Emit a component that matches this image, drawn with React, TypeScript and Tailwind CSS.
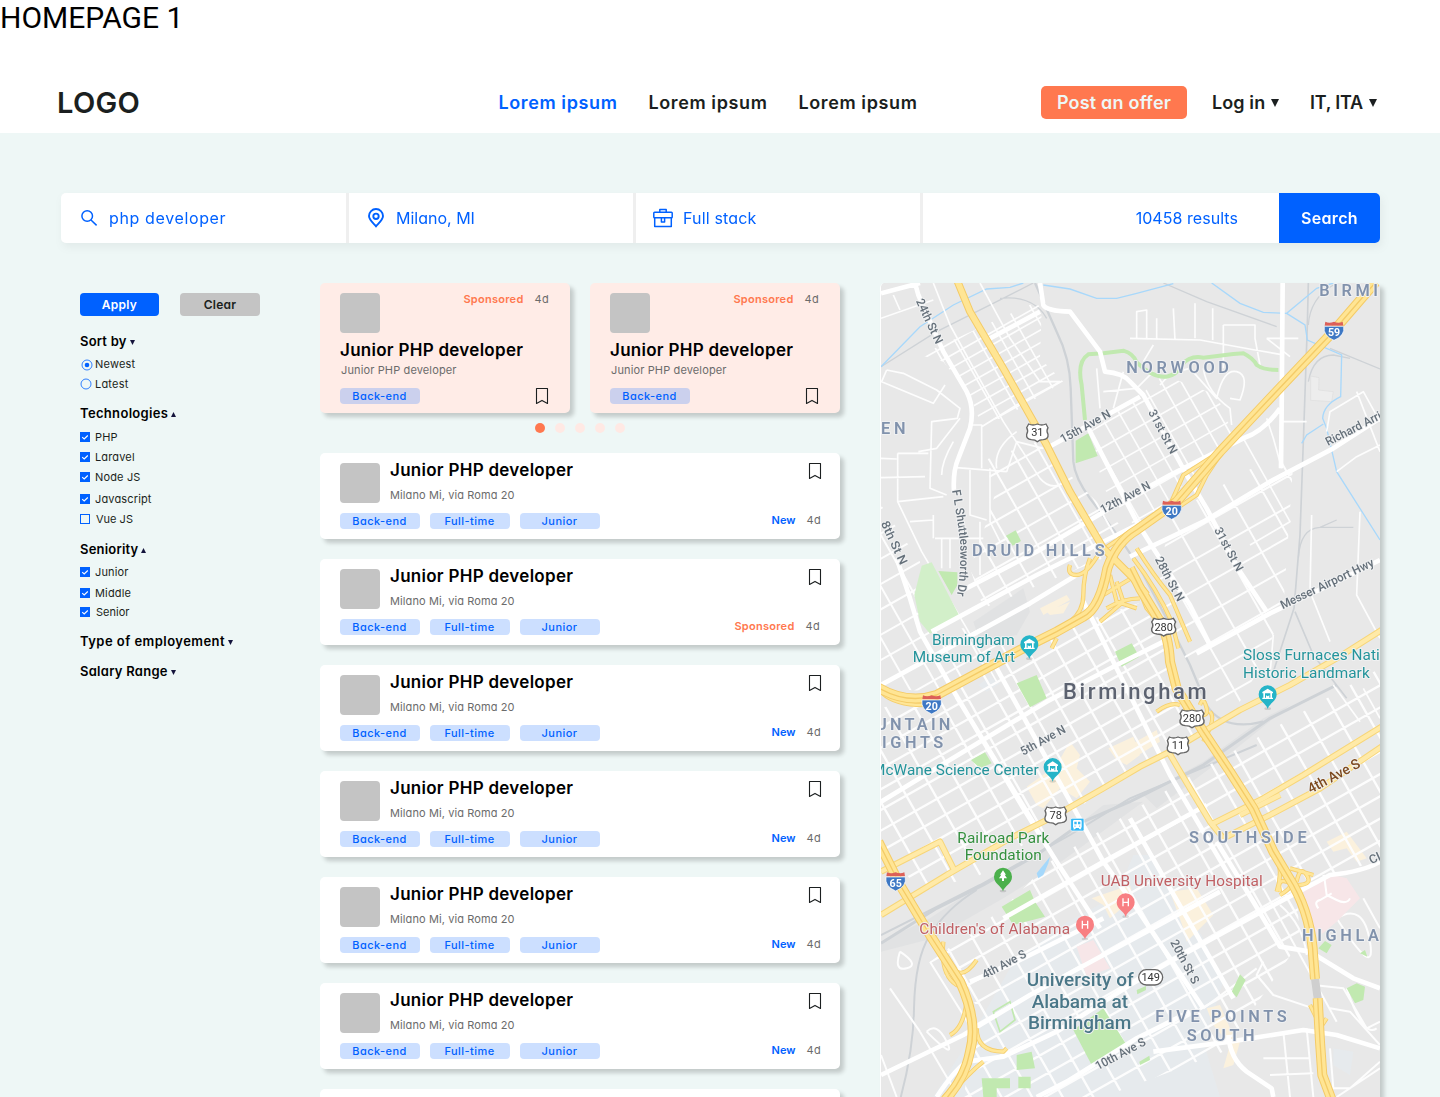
import React from "react";

const UI = "font-['Inter',sans-serif] [font-feature-settings:'cv11']";

function Caret({ up = false, size = 5, color = "#14143c" }: { up?: boolean; size?: number; color?: string }) {
  return (
    <svg width={size} height={size} viewBox="0 0 10 10" className="shrink-0">
      <path d={up ? "M0 10L5 0L10 10Z" : "M0 0L5 10L10 0Z"} fill={color} />
    </svg>
  );
}

function Bookmark() {
  return (
    <svg width="14" height="18" viewBox="0 0 14 18" fill="none" stroke="#1b1f20" strokeWidth="1.1" className="shrink-0">
      <path d="M1.5 1.5H12.5V16.5L7 13.4L1.5 16.5Z" strokeLinejoin="round" />
    </svg>
  );
}

function Header() {
  return (
    <header className="h-[133px] bg-white">
      <div className="h-[36px] font-['Roboto',sans-serif] text-[30px] leading-[35px] text-black">HOMEPAGE 1</div>
      <div className="mt-[50px] flex h-[33px] items-center text-[18px] font-semibold text-[#1b1f20]">
        <div className="ml-[57px] w-[441.5px] text-[29px] font-semibold tracking-[0.3px]">LOGO</div>
        <nav className="flex w-[542.5px] tracking-[0.6px]">
          <span className="w-[150px] text-[#0061ff]">Lorem ipsum</span>
          <span className="w-[150px]">Lorem ipsum</span>
          <span>Lorem ipsum</span>
        </nav>
        <button className="h-[33px] w-[146px] rounded-[5px] bg-[#ff784f] text-[18px] font-semibold text-[#eef7f6] tracking-[0.2px]">Post an offer</button>
        <div className="ml-[25px] flex w-[98px] items-center gap-[6px]">
          <span className="tracking-[0.1px]">Log in</span>
          <Caret size={8} color="#1b1f20" />
        </div>
        <div className="flex items-center gap-[6px]">
          <span className="tracking-[-0.25px]">IT, ITA</span>
          <Caret size={8} color="#1b1f20" />
        </div>
      </div>
    </header>
  );
}

function SearchBar() {
  return (
    <div className="ml-[61px] mt-[60px] flex h-[50px] w-[1319px] gap-[3px] overflow-hidden rounded-[5px] bg-[#efefef] text-[16px] text-[#0061ff]">
      <div className="flex w-[285px] items-center bg-white pl-[19px]">
        <svg width="18" height="18" viewBox="0 0 18 18" fill="none" stroke="#0061ff" strokeWidth="1.5">
          <circle cx="7.2" cy="7" r="5.3" />
          <path d="M11 11L16.6 16.4" />
        </svg>
        <span className="ml-[11px] tracking-[0.63px]">php developer</span>
      </div>
      <div className="flex w-[284px] items-center bg-white pl-[18px]">
        <svg width="18" height="20" viewBox="0 0 18 20" fill="none" stroke="#0061ff" strokeWidth="1.9">
          <path d="M9 18.3C5 14 2 11.5 2 8A7 7 0 0 1 16 8C16 11.5 13 14 9 18.3Z" />
          <circle cx="9" cy="8.3" r="2.7" />
        </svg>
        <span className="ml-[11px]">Milano, MI</span>
      </div>
      <div className="flex w-[284px] items-center bg-white pl-[17px]">
        <svg width="20" height="20" viewBox="0 0 20 20" fill="none" stroke="#0061ff" strokeWidth="1.5" strokeLinejoin="round">
          <path d="M6.8 4.2V1.5H13.2V4.2" />
          <rect x="0.8" y="4.2" width="18.4" height="5.6" rx="0.8" />
          <path d="M1.7 9.8V18.5H18.3V9.8" />
          <path d="M8.4 9.8V14H11.6V9.8" />
        </svg>
        <span className="ml-[10px] tracking-[0.17px]">Full stack</span>
      </div>
      <div className="flex flex-1 bg-white">
        <span className="flex flex-1 items-center justify-end pr-[41px] tracking-[0.05px]">10458 results</span>
        <button className="w-[101px] bg-[#0061ff] font-semibold tracking-[0.35px] text-white">Search</button>
      </div>
    </div>
  );
}

function Heading({ children, up, className }: { children: string; up?: boolean; className: string }) {
  return (
    <div className={"flex h-5 items-center gap-[3px] pt-[2px] text-[13px] font-semibold text-black " + className}>
      <span>{children}</span>
      <Caret up={up} />
    </div>
  );
}

function Check({ label, off = false, nudge = false, className = "" }: { label: string; off?: boolean; nudge?: boolean; className?: string }) {
  return (
    <label className={"flex h-5 items-center text-[11px] text-[#1b1f20] " + className}>
      <svg width="10" height="10" viewBox="0 0 10 10" className="shrink-0">
        <rect x="0.5" y="0.5" width="9" height="9" fill={off ? "none" : "#0061ff"} stroke="#0061ff" />
        {!off && <path d="M2.2 5.2L4.2 7L7.8 3.5" fill="none" stroke="white" strokeWidth="1.1" />}
      </svg>
      <span className={nudge ? "ml-[6px]" : "ml-[5px] tracking-[0.15px]"}>{label}</span>
    </label>
  );
}

function Radio({ label, on = false }: { label: string; on?: boolean }) {
  return (
    <label className="flex h-5 items-center text-[11px] tracking-[0.2px] text-[#1b1f20]">
      <svg width="12" height="12" viewBox="0 0 12 12" className={on ? "ml-px mt-px shrink-0" : "mr-px shrink-0"}>
        <circle cx="6" cy="6" r="5" fill="none" stroke="#0061ff" strokeWidth="0.8" />
        {on && <circle cx="6" cy="6" r="2.3" fill="#0061ff" />}
      </svg>
      <span className="ml-[2px]">{label}</span>
    </label>
  );
}

function Filters() {
  return (
    <aside className="w-[240px] pt-[10px]">
      <div className="flex gap-[21px] text-[12px] font-semibold tracking-[0.25px]">
        <button className="h-[23px] w-[79px] rounded-[4px] bg-[#0061ff] text-white">Apply</button>
        <button className="h-[23px] w-[80px] rounded-[4px] bg-[#c4c4c4] text-[#1b1f20]">Clear</button>
      </div>
      <Heading className="mt-[15px] tracking-[0.2px]">Sort by</Heading>
      <div className="mt-[3px]">
        <Radio label="Newest" on />
        <Radio label="Latest" />
      </div>
      <Heading up className="mt-[9px] tracking-[0.33px]">Technologies</Heading>
      <div className="mt-1">
        <Check label="PHP" />
        <Check label="Laravel" />
        <Check label="Node JS" />
        <Check label="Javascript" className="mt-[2px] tracking-[0.2px]" />
        <Check label="Vue JS" off nudge />
      </div>
      <Heading up className="mt-[10px] tracking-[0.2px]">Seniority</Heading>
      <div className="mt-[3px]">
        <Check label="Junior" />
        <Check label="Middle" className="mt-px" />
        <Check label="Senior" nudge className="-mt-px" />
      </div>
      <Heading className="mt-[9px] tracking-[0.46px]">Type of employement</Heading>
      <Heading className="mt-[10px] tracking-[0.27px]">Salary Range</Heading>
    </aside>
  );
}

function Tag({ children, dark = false }: { children: string; dark?: boolean }) {
  return (
    <span className={"flex h-4 w-20 items-center justify-center rounded-[4px] pr-px text-[11px] font-medium tracking-[0.45px] text-[#0061ff] " + (dark ? "bg-[#cbd0ed]" : "bg-[#ccdfff]")}>
      {children}
    </span>
  );
}

const Avatar = () => <div className="size-10 shrink-0 rounded-[4px] bg-[#c4c4c4]" />;

function SponsoredCard() {
  return (
    <article className="h-[130px] w-[250px] rounded-[5px] bg-[#ffece7] pl-5 pt-[10px] shadow-[4px_4px_4px_rgba(0,0,0,0.18)]">
      <div className="flex h-10 justify-between pr-[21px]">
        <Avatar />
        <div className="flex h-3 items-center gap-[11px] text-[11px]">
          <span className="font-semibold tracking-[0.27px] text-[#ff784f]">Sponsored</span>
          <span className="tracking-[0.3px] text-[#6b6b6b]">4d</span>
        </div>
      </div>
      <h3 className="mt-[7px] h-5 text-[17px] font-semibold leading-5 tracking-[0.28px] text-black">Junior PHP developer</h3>
      <p className="ml-px mt-[3px] h-[14px] text-[11px] leading-[14px] tracking-[0.13px] text-[#6b6b6b]">Junior PHP developer</p>
      <div className="mt-[11px] flex h-4 items-center justify-between pr-[21px]">
        <Tag dark>Back-end</Tag>
        <Bookmark />
      </div>
    </article>
  );
}

function JobCard({ sponsored = false }: { sponsored?: boolean }) {
  return (
    <article className="h-[86px] shrink-0 rounded-[5px] bg-white pl-5 pr-[18px] pt-[10px] shadow-[4px_4px_4px_rgba(0,0,0,0.18)]">
      <div className="flex h-10">
        <Avatar />
        <div className="ml-[10px] flex-1">
          <h3 className="-mt-[3px] h-5 text-[17px] font-semibold leading-5 tracking-[0.28px] text-black">Junior PHP developer</h3>
          <p className="mt-[8px] h-[14px] text-[11px] leading-[14px] tracking-[0.1px] text-[#6b6b6b]">Milano Mi, via Roma 20</p>
        </div>
        <div className="-mt-[1px]"><Bookmark /></div>
      </div>
      <div className="mt-[10px] flex h-4 items-center gap-[10px]">
        <Tag>Back-end</Tag>
        <Tag>Full-time</Tag>
        <Tag>Junior</Tag>
        <div className={"flex flex-1 items-center justify-end gap-[11px] pb-px text-[11px] " + (sponsored ? "pr-[2px]" : "pr-px")}>
          {sponsored ? <span className="font-semibold tracking-[0.27px] text-[#ff784f]">Sponsored</span> : <span className="font-semibold text-[#0061ff]">New</span>}
          <span className="tracking-[0.3px] text-[#6b6b6b]">4d</span>
        </div>
      </div>
    </article>
  );
}

/* ---------- Map ---------- */

type Pt = [number, number];

/** Builds the lines of a street grid, later rotated to the town's main axis. */
function gridPath(cx: number, cy: number, w: number, h: number, stepX: number, stepY: number) {
  let d = "";
  for (let x = cx - w; x <= cx + w; x += stepX) d += `M${x} ${cy - h}V${cy + h}`;
  for (let y = cy - h; y <= cy + h; y += stepY) d += `M${cx - w} ${y}H${cx + w}`;
  return d;
}

const grids: { id: string; clip: string; c: Pt; size: Pt; step: Pt; w: number }[] = [
  { id: "nw", clip: "150,240 500,80 515,110 510,250 580,320 400,430 330,440 300,360 220,260", c: [350, 260], size: [300, 300], step: [62, 33], w: 5 },
  { id: "druid", clip: "330,560 500,500 640,640 760,760 700,850 340,1000 300,880 350,740 380,640", c: [520, 760], size: [400, 400], step: [72, 62], w: 6 },
  { id: "norwood", clip: "660,470 800,370 880,300 1040,360 1090,480 1010,560 880,690 800,760 700,640", c: [860, 540], size: [400, 400], step: [52, 60], w: 5 },
  { id: "east", clip: "900,720 1180,560 1270,560 1240,1000 1180,1160 1080,1330 960,1180 860,960", c: [1060, 920], size: [500, 500], step: [92, 80], w: 6 },
  { id: "west", clip: "33,690 150,860 150,1060 330,1060 450,1130 200,1250 33,1240", c: [180, 1000], size: [400, 400], step: [76, 66], w: 6 },
  { id: "town", clip: "33,1300 260,1230 640,1040 820,980 900,1160 1000,1380 820,1470 560,1640 330,1800 150,1850 33,1700", c: [500, 1400], size: [800, 700], step: [76, 54], w: 7 },
  { id: "south", clip: "540,1760 800,1600 1000,1480 1140,1400 1530,1180 1530,1750 1280,1850 1290,2000 1060,2330 700,2466 280,2466 330,2200 180,2060 400,1900", c: [850, 1850], size: [1100, 900], step: [80, 58], w: 7 },
];

const localStreets =
  "M33 130L190 75M70 60L90 105M190 24L240 150L300 260L400 440L510 610Q545 650 585 620M330 24L420 190L510 320L570 320M50 285L100 295L200 345L270 400L262 430L185 440L180 640L230 660M50 285L35 320L190 385L225 330M33 550L80 552M33 608L165 605M83 535V680L155 830L290 1060L380 1220M83 535H175M83 680L220 665M120 740L190 735M145 530L200 520L270 430M215 600Q215 560 250 500M305 450H335V580M260 578L410 590M335 455L440 390L570 320M380 580Q370 520 440 470M410 590L440 500L520 520M360 580V740L390 800M300 580V720L350 735M190 720V790M195 790L340 790M215 790V880M330 740V900M240 790V880M800 190V110L830 105V190M780 190L990 195L1155 225L1230 238M860 130V195M910 100L915 195M975 85V190M1028 100V195M1060 150H1155V190L1170 270M1060 150V280M850 210L820 260M700 350L800 340L850 290M680 280L690 400M760 290L730 400M870 330Q900 290 960 280L1040 370Q1060 280 1100 290T1110 375L1080 370M1000 280Q1010 350 1080 400L1085 450M1190 190L1285 190M1190 190L1260 245M1230 440L1310 440M1190 430L1210 490L1235 580M1120 490L1260 740L1140 810M1370 470L1380 410L1480 350L1530 440M1460 350L1530 530M1400 590L1460 545L1530 510M1325 720L1320 950L1380 1100M1470 710L1460 960L1530 1090M1210 1080L1200 1200M1390 1230L1470 1340M1480 1240L1530 1330";

const localSouth =
  "M90 2030Q70 2090 110 2080T90 2030M150 2270L250 2440M180 2060L330 2300M33 2340L80 2466M60 2140L150 2270M170 2270Q200 2240 230 2300T170 2270M1180 1840L1400 2240M1230 1890Q1300 1950 1310 2040M1360 1800L1370 1860L1450 1880L1440 1840M1340 1950L1370 1900M1400 1930Q1480 1880 1500 2000T1400 1930M1480 1870L1530 1960M1330 2130L1420 2140L1490 2260L1530 2240M1180 2060L1160 2100L1210 2160L1330 2200M1000 2200L1160 2080M1180 2350H1320M1200 2400L1330 2395M1240 2270L1260 2466M1310 2260L1330 2466M1380 2320L1390 2440L1440 2440L1530 2360M1400 2466L1530 2380M1380 2200L1440 2210L1530 2310M1430 2140Q1480 2290 1520 2260";

const avenues =
  "M33 55L150 24M360 190L510 110M135 24L145 60L220 230L290 350Q315 400 300 460L265 550Q248 590 252 650M80 850L120 970L150 1070L240 1230L460 1600L560 1760L690 1960M510 24L520 90Q530 108 600 110L690 230L705 290Q760 295 780 320L820 360L950 600L1010 700L1110 890L1190 1010M530 520L810 365M270 950L500 830L720 700L900 600L1040 530L1120 490Q1180 470 1230 400M1238 24L1235 400L1233 580M780 845L1000 740L1200 620L1390 520L1530 430M645 440L800 740L850 820L960 990L1020 1110M185 1070L500 900L800 750M980 1135L1200 1015L1400 920L1530 855M33 1580L330 1400L530 1280L740 1170L900 1090M640 980L750 1200L900 1500L1100 1840M380 1180L700 1760L800 1900L1000 2200M260 1265L500 1660M33 1230L480 985L620 900M780 1630L900 1840L1090 2170M1040 1700L1150 1880L1230 2015L1320 2030L1450 2110L1530 2140M1530 1760Q1480 1790 1380 1800L1230 1880L900 2060L780 2130L560 2270L400 2345L290 2360Q250 2390 200 2466M33 2400L280 2280L480 2160L700 2040L830 1970L1050 1850M400 1930L700 1760L1010 1590M500 2466L590 2420L800 2290L960 2210M850 2330L1080 2300L1300 2265L1400 2280L1530 2320M1075 2280Q1080 2350 1130 2390L1205 2440L1210 2466M300 2120L420 2070L700 1930";

const freeways = [
  "M262 18L300 110L400 280L530 510L600 650L700 820L790 910L830 960",
  "M1520 18L1380 180L1200 370L1050 530L920 680L800 765Q740 800 712 880Q690 1000 640 1025L560 1070L450 1125L330 1190L200 1260Q110 1290 20 1235",
  "M780 880L810 940L870 1040Q895 1080 900 1160L920 1240L1000 1370L1080 1490L1150 1600L1210 1730L1270 1830Q1325 1930 1330 2050L1335 2112",
  "M1343 2170L1350 2300L1357 2400L1385 2475",
  "M25 1700L90 1830L180 1980L270 2120Q325 2240 300 2330Q285 2410 225 2475",
];

const arterials = [
  "M33 1920L230 1800L420 1690L560 1620L700 1540L810 1475L900 1430L1000 1370L1110 1305L1260 1230L1400 1150L1535 1065",
  "M33 1790L210 1700L255 1790",
  "M895 1430L960 1540L1020 1640L1060 1690",
  "M1020 1650L1180 1570L1300 1500L1535 1355",
  "M1060 1690L1200 1620L1350 1540L1535 1415",
  "M1110 1620L1230 1560",
];

const ramps =
  "M600 870Q590 900 620 900T690 830L780 770M660 850Q640 900 640 960Q640 1010 600 1040M720 900L740 980L800 1000M700 960L800 900M710 1000Q760 970 810 970M690 1040L760 980L740 920M900 690L940 600L1050 530M920 700L980 660L1010 600L1050 540M800 820Q850 900 900 960L960 1100M33 1250Q70 1290 160 1290M790 850Q860 940 905 1040L925 1120M790 900L830 1000L900 1080M220 2000Q210 2100 260 2130L290 2140M230 2060Q270 2130 320 2055M240 2280Q280 2260 290 2180M320 2260Q320 2330 400 2330L410 2320M340 2360Q300 2390 240 2460M860 1310Q900 1280 930 1290M990 1290Q1000 1260 1010 1300T940 1300M1000 1400Q1040 1330 1020 1310M1220 1740Q1240 1790 1220 1850M1230 1850Q1220 1810 1250 1820T1230 1860M1260 1780L1330 1800M1280 1820Q1290 1770 1310 1800T1280 1830M1320 2190L1340 2230M1370 2230L1350 2260M560 1090L545 1120";

function Halo(props: React.SVGProps<SVGTextElement> & { width: number }) {
  const { width, ...rest } = props;
  return <text textLength={width} stroke="#f0f1f2" strokeWidth="6" strokeLinejoin="round" paintOrder="stroke" {...rest} />;
}

function District({ x, y, width, children }: { x: number; y: number; width: number; children: string }) {
  return <Halo x={x} y={y} width={width} fontSize="49" fontWeight="600" fill="#8192ac">{children}</Halo>;
}

function Road({ x, y, width, angle, children, color = "#65707a", size = 36 }: { x: number; y: number; width: number; angle: number; children: string; color?: string; size?: number }) {
  return (
    <Halo width={width} lengthAdjust="spacingAndGlyphs" transform={`translate(${x} ${y}) rotate(${angle})`} fontSize={size} fontWeight="500" fill={color}>{children}</Halo>
  );
}

function Pin({ x, y, color, kind }: { x: number; y: number; color: string; kind: "museum" | "tree" | "H" }) {
  return (
    <g transform={`translate(${x} ${y})`}>
      <ellipse cx="0" cy="43" rx="10" ry="4" fill="#00000020" />
      <path d="M0 44C-5 26-27 22-27 0A27 27 0 1 1 27 0C27 22 5 26 0 44Z" fill={color} />
      {kind === "museum" && <path d="M-16-7L0-17L16-7V-3H13V10H16V14H-16V10H-13V-3H-16ZM-8-3V10H-5V3L0 6L5 3V10H8V-3Z" fill="white" fillRule="evenodd" />}
      {kind === "tree" && <path d="M0-19L9-6H5L12 5H3V13H-3V5H-12L-5-6H-9Z" fill="white" />}
      {kind === "H" && <path d="M-8-12V12M8-12V12M-8 0H8" stroke="white" strokeWidth="4" />}
    </g>
  );
}

function Interstate({ x, y, n }: { x: number; y: number; n: string }) {
  return (
    <g transform={`translate(${x} ${y})`}>
      <path d="M-26-27Q-14-21 0-27Q14-21 26-27L28-15H-28Z" fill="#dc6058" />
      <path d="M-29-13H29Q34 15 0 29Q-34 15-29-13Z" fill="#3e78c4" stroke="white" strokeWidth="2" />
      <text y="17" textAnchor="middle" fill="white" fontSize="32" fontWeight="700">{n}</text>
    </g>
  );
}

function Shield({ x, y, n, wide = false }: { x: number; y: number; n: string; wide?: boolean }) {
  return (
    <g transform={`translate(${x} ${y})`}>
      <path transform={wide ? "scale(1.12 1)" : undefined} d="M-26-25Q-13-19 0-25Q13-19 26-25L32-14Q26-4 32 6Q34 20 18 22Q6 22 0 28Q-6 22-18 22Q-34 20-32 6Q-26-4-32-14Z" fill="white" stroke="#666" strokeWidth="4" />
      <text y="12" textAnchor="middle" fill="#333" fontSize="33">{n}</text>
    </g>
  );
}

function CityMap() {
  return (
    <div className="ml-10 h-[814px] w-[500px] shrink-0 overflow-hidden rounded-t-[5px] border-l border-white bg-[#e8e8e8]">
      <svg width="499" height="814" viewBox="33 24 1497 2442" className="block font-['Roboto',sans-serif]">
        <defs>
          {grids.map((g) => (
            <clipPath key={g.id} id={`area-${g.id}`}><polygon points={g.clip} /></clipPath>
          ))}
          <path id="shuttlesworth" d="M246 646Q262 730 270 800Q274 890 258 975" />
        </defs>
        <rect x="33" y="24" width="1497" height="2442" fill="#e8e8e8" />
        <g fill="#e6eaed">
          <path d="M190 2466L300 2290L420 2080L560 1960L740 1860L790 1740L840 1740L1000 1990L1060 2120L1000 2300L1050 2466Z" />
          <path d="M325 1230L360 1205L390 1225L350 1250ZM1390 2320L1450 2330L1440 2400L1390 2370Z" />
        </g>
        <g fill="#e1e2e3">
          <path d="M310 1040L460 940L480 1010L440 1080L330 1100ZM33 2000L180 1930L330 1830L560 1700L700 1590L820 1580L560 1770L400 1870L190 1990L33 2030Z" />
          <path d="M820 1560L1000 1460L1180 1330L1260 1290L1100 1420L860 1600Z" />
        </g>
        <path d="M1322 303L1347 308L1346 345L1390 350L1385 380L1322 376Z" fill="#ededed" stroke="#dedede" strokeWidth="2" />
        <g fill="#fbf1dd">
          <path d="M470 1535L560 1470L600 1400L630 1440L620 1480L660 1520L620 1570L570 1540L520 1600L500 1590ZM715 1420L790 1385L810 1440L770 1470L740 1455ZM780 1410L860 1365L870 1400L790 1450ZM510 1000L590 960L600 975L520 1020ZM530 1010L600 980L580 1015L540 1020Z" />
          <path d="M665 1870L780 1830L790 1870L720 1930L700 1890ZM900 1850L980 1840L1030 1920L950 2000L940 1960ZM1370 1700L1430 1670L1490 1750L1460 1760L1430 1720L1390 1730ZM1010 2200L1050 2190L1080 2260L1110 2300L1090 2370L1060 2380L1080 2310L1030 2250Z" />
        </g>
        <g fill="none" stroke="#ced2d6" strokeLinejoin="round">
          <path d="M495 24L560 170Q600 250 602 340L610 560Q615 610 660 670L750 790L810 880L900 1050L960 1170L1010 1290Q1060 1370 1180 1340" strokeWidth="7" />
          <path d="M1315 24L1312 150L1300 500L1290 780L1272 1000L1210 1190M1275 1010L1330 1140L1430 1270" strokeWidth="5" />
          <path d="M33 275L200 170L380 80L490 24M390 70Q490 60 530 130M880 24L1010 80L1220 155M1380 220L1530 282M1315 150Q1320 70 1390 30M1315 320Q1330 240 1390 240L1440 250M1285 850Q1290 760 1350 757H1450M1350 757L1400 735" strokeWidth="4" />
          <path d="M33 2005L200 1900L340 1830L500 1740L640 1640L780 1580L1000 1470L1200 1330L1400 1230" strokeWidth="9" />
          <path d="M33 1980L330 1830L600 1680L780 1570L1160 1410M90 2475Q130 2330 132 2200Q135 2050 180 1980Q230 1900 320 1845" strokeWidth="6" />
        </g>
        <g fill="none" stroke="#a8d8fb" strokeWidth="4">
          <path d="M33 275L150 155L250 90L350 42L420 37L460 24M520 30L600 42L680 70L740 70L800 55L910 26M1025 24L1110 85L1180 112L1250 115L1340 40L1390 24M1250 115L1305 150L1312 195L1415 240L1412 365Q1360 390 1358 430L1370 460L1400 590L1530 795M1360 447L1310 480L1295 505" />
        </g>
        <g fill="none" stroke="#fdfdfd" strokeLinejoin="round">
          {grids.map((g) => (
            <g key={g.id} clipPath={`url(#area-${g.id})`}>
              <path d={gridPath(g.c[0], g.c[1], g.size[0], g.size[1], g.step[0], g.step[1])} transform={`rotate(-29.5 ${g.c[0]} ${g.c[1]})`} strokeWidth={g.w} />
            </g>
          ))}
          <path d={localStreets} strokeWidth="5" />
          <path d={localSouth} strokeWidth="6" />
        </g>
        <path d="M1300 1850L1390 1800L1430 1810L1470 1870L1400 1940L1345 1985L1320 1930ZM620 2015L670 1995L720 2080L650 2105Z" fill="#f7e6e8" />
        <path d="M1362 1800L1370 1860L1400 1875Q1430 1890 1440 1870M1345 1900Q1330 1880 1350 1875L1385 1855" fill="none" stroke="white" strokeWidth="6" />
        <path d="M155 872L185 862L272 1030L180 1076L150 1040L133 960Z" fill="#d2efc9" />
        <g fill="#c1e9b0">
          <path d="M617 497L655 475L683 543L617 565ZM408 782L437 766L453 798L428 812ZM205 888L262 892L262 930L245 960ZM735 1130L785 1105L808 1145L755 1175ZM440 1225L500 1200L530 1270L480 1297ZM303 1455L345 1432L365 1465L330 1480ZM395 1895L480 1845L495 1880L525 1925L430 1950ZM610 2265L700 2200L770 2310L665 2370Z" />
          <path d="M440 2340L485 2330L495 2380L440 2385ZM335 2410H420V2440H380V2466H340ZM445 2405H482V2440H445ZM1085 2150L1110 2098L1127 2115L1100 2167ZM1430 2140L1460 2125L1485 2135L1480 2175L1455 2185ZM1345 2020L1365 1998L1385 2010L1370 2035ZM1470 2035L1485 2025L1492 2045ZM800 2145L828 2133L828 2145L802 2158ZM808 2360L838 2342L840 2355L810 2370ZM1200 1560L1225 1548L1228 1560L1205 1570Z" />
        </g>
        <path d="M370 2210L420 2180L435 2235L390 2270Z" fill="none" stroke="#c1e9b0" strokeWidth="5" />
        <path d="M500 1795L540 1745L535 1765L520 1800L505 1810Z" fill="#a5d8fb" />
        <path d="M645 435L635 330Q620 260 655 238L700 235L760 227Q790 235 800 262Q850 310 890 305Q920 300 935 270Q960 240 1000 248L1090 237L1120 235Q1150 250 1160 270Q1180 285 1225 285" fill="none" stroke="#c1e9b0" strokeWidth="12" />
        <path d={avenues} fill="none" stroke="white" strokeWidth="14" strokeLinejoin="round" />
        <g fill="none" strokeLinejoin="round">
          <path d={ramps} stroke="#f5ce6c" strokeWidth="13" />
          <path d={ramps} stroke="#ffe697" strokeWidth="8" />
          {arterials.map((d) => <path key={d} d={d} stroke="#f7d679" strokeWidth="19" />)}
          {arterials.map((d) => <path key={d} d={d} stroke="#ffeaa8" strokeWidth="13" />)}
          <path d="M1335 2112L1343 2170" stroke="#cfcfcf" strokeWidth="24" />
          {freeways.map((d, i) => <path key={d} d={d} stroke="#f4cb67" strokeWidth={i === 0 ? 23 : 30} />)}
          {freeways.map((d, i) => <path key={d} d={d} stroke="#ffe594" strokeWidth={i === 0 ? 17 : 24} />)}
          {freeways.slice(1).map((d) => <path key={d} d={d} stroke="#f4cb67" strokeWidth="4" />)}
        </g>

        <District x={1348} y={62} width={176}>BIRMI</District>
        <District x={769} y={294} width={308}>NORWOOD</District>
        <District x={33} y={476} width={74}>EN</District>
        <District x={306} y={844} width={398}>DRUID HILLS</District>
        <District x={18} y={1364} width={223}>UNTAIN</District>
        <District x={36} y={1420} width={184}>IGHTS</District>
        <District x={957} y={1703} width={353}>SOUTHSIDE</District>
        <District x={1296} y={1997} width={231}>HIGHLA</District>
        <District x={856} y={2241} width={394}>FIVE POINTS</District>
        <District x={950} y={2297} width={204}>SOUTH</District>

        <Road x={137} y={78} width={145} angle={65}>24th St N</Road>
        <text fontSize="36" fontWeight="500" fill="#65707a" stroke="#f0f1f2" strokeWidth="6" paintOrder="stroke">
          <textPath href="#shuttlesworth" textLength="318" lengthAdjust="spacingAndGlyphs">F L Shuttlesworth Dr</textPath>
        </text>
        <Road x={32} y={745} width={140} angle={65}>8th St N</Road>
        <Road x={579} y={505} width={167} angle={-29}>15th Ave N</Road>
        <Road x={699} y={716} width={164} angle={-28}>12th Ave N</Road>
        <Road x={834} y={412} width={144} angle={62}>31st St N</Road>
        <Road x={1032} y={765} width={144} angle={62}>31st St N</Road>
        <Road x={854} y={853} width={146} angle={62}>28th St N</Road>
        <Road x={1374} y={513} width={183} angle={-27}>Richard Arri</Road>
        <Road x={1238} y={1003} width={306} angle={-25.5}>Messer Airport Hwy</Road>
        <Road x={460} y={1442} width={148} angle={-29}>5th Ave N</Road>
        <Road x={344} y={2112} width={144} angle={-28}>4th Ave S</Road>
        <Road x={1322} y={1556} width={172} angle={-28} color="#7d4a1f" size={42}>4th Ave S</Road>
        <Road x={900} y={2002} width={144} angle={62}>20th St S</Road>
        <Road x={684} y={2386} width={165} angle={-28}>10th Ave S</Road>
        <Road x={1504} y={1768} width={34} angle={-25}>Cl</Road>

        <g fontSize="46" fill="#24949b">
          <Halo x={186} y={1109} width={248}>Birmingham</Halo>
          <Halo x={128} y={1161} width={307}>Museum of Art</Halo>
          <Halo x={1119} y={1155} width={410}>Sloss Furnaces Nati</Halo>
          <Halo x={1119} y={1208} width={380}>Historic Landmark</Halo>
          <Halo x={6} y={1500} width={500}>McWane Science Center</Halo>
        </g>
        <g fontSize="46" fill="#35903f">
          <Halo x={262} y={1704} width={276}>Railroad Park</Halo>
          <Halo x={284} y={1756} width={231}>Foundation</Halo>
        </g>
        <g fontSize="46" fill="#c06064">
          <Halo x={692} y={1833} width={486}>UAB University Hospital</Halo>
          <Halo x={148} y={1976} width={452}>{"Children's of Alabama"}</Halo>
        </g>
        <g fontSize="57" fontWeight="500" fill="#4a7788">
          <Halo x={470} y={2134} width={321}>University of</Halo>
          <Halo x={485} y={2198} width={289}>Alabama at</Halo>
          <Halo x={474} y={2263} width={310}>Birmingham</Halo>
        </g>
        <Halo x={579} y={1271} width={431} fontSize="66" fontWeight="500" fill="#5c6270">Birmingham</Halo>

        <Pin x={478} y={1108} color="#25b4c8" kind="museum" />
        <Pin x={1193} y={1258} color="#25b4c8" kind="museum" />
        <Pin x={548} y={1476} color="#25b4c8" kind="museum" />
        <Pin x={399} y={1805} color="#4bb04c" kind="tree" />
        <Pin x={767} y={1882} color="#f87f82" kind="H" />
        <Pin x={645} y={1949} color="#f87f82" kind="H" />

        <Interstate x={1392} y={167} n="59" />
        <Interstate x={905} y={704} n="20" />
        <Interstate x={185} y={1288} n="20" />
        <Interstate x={77} y={1819} n="65" />
        <Shield x={502} y={472} n="31" />
        <Shield x={881} y={1055} n="280" wide />
        <Shield x={966} y={1330} n="280" wide />
        <Shield x={924} y={1411} n="11" />
        <Shield x={557} y={1621} n="78" />
        <g transform="translate(842 2107)">
          <rect x="-36" y="-23" width="72" height="46" rx="23" fill="white" stroke="#666" strokeWidth="4" />
          <text y="12" textAnchor="middle" fill="#333" fontSize="33">149</text>
        </g>
        <g transform="translate(622 1649)">
          <rect x="-20" y="-19" width="40" height="38" rx="4" fill="#35b8f5" stroke="white" strokeWidth="2" />
          <path d="M-13-11Q-13-14-9-14H9Q13-14 13-11V7Q13 10 10 10L13 14H7L4 10H-4L-7 14H-13L-10 10Q-13 10-13 7ZM-9-9V-1H-2V-9ZM2-9V-1H9V-9Z" fill="white" fillRule="evenodd" />
          <path d="M-7 3V6M7 3V6" stroke="#35b8f5" strokeWidth="3" />
        </g>
      </svg>
    </div>
  );
}

export default function App() {
  return (
    <div className={"h-[1097px] w-[1440px] overflow-hidden bg-[#eef7f6] " + UI}>
      <Header />
      <div className="drop-shadow-[2px_4px_4px_rgba(0,0,0,0.05)]"><SearchBar /></div>
      <main className="ml-20 mt-10 flex h-[814px]">
        <Filters />
        <section className="w-[520px] shrink-0">
          <div className="flex gap-5">
            <SponsoredCard />
            <SponsoredCard />
          </div>
          <div className="mt-[10px] flex justify-center gap-[10px]">
            <i className="size-[10px] rounded-full bg-[#ff784f]" />
            <i className="size-[10px] rounded-full bg-[#ffe9e4]" />
            <i className="size-[10px] rounded-full bg-[#ffe9e4]" />
            <i className="size-[10px] rounded-full bg-[#ffe9e4]" />
            <i className="size-[10px] rounded-full bg-[#ffe9e4]" />
          </div>
          <div className="mt-5 flex flex-col gap-5">
            {[0, 1, 2, 3, 4, 5].map((i) => <JobCard key={i} sponsored={i === 1} />)}
            <div className="h-2 rounded-t-[5px] bg-white shadow-[4px_4px_4px_rgba(0,0,0,0.18)]" />
          </div>
        </section>
        <div className="drop-shadow-[4px_4px_2px_rgba(0,0,0,0.18)]"><CityMap /></div>
      </main>
    </div>
  );
}
